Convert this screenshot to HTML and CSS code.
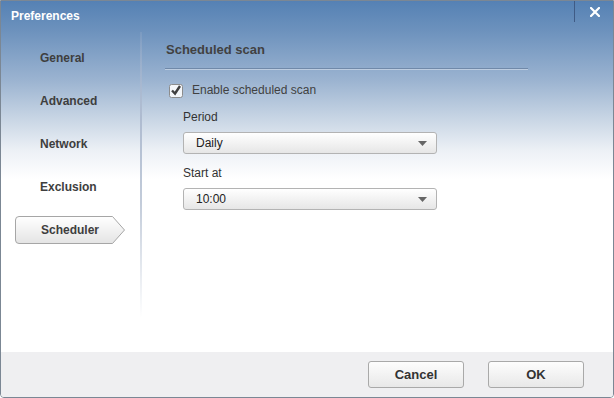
FILE: index.html
```html
<!DOCTYPE html>
<html>
<head>
    <meta charset="UTF-8">
    <title>Preferences</title>
    <link rel="stylesheet" href="styles.css">
</head>
<body>
    <div class="dialog">
        <div class="titlebar">
            <span class="title">Preferences</span>
            <div class="close">
                <svg width="10" height="10" viewBox="0 0 10 10">
                    <path d="M1 1 L9 9 M9 1 L1 9" stroke="#fff" stroke-width="2.2" stroke-linecap="square"/>
                </svg>
            </div>
        </div>

        <div class="main">
            <div class="sidebar">
                <div class="nav-item">General</div>
                <div class="nav-item">Advanced</div>
                <div class="nav-item">Network</div>
                <div class="nav-item">Exclusion</div>
                <div class="nav-item active">
                    <svg class="tab-shape" width="112" height="29" viewBox="0 0 112 29">
                        <defs>
                            <linearGradient id="tabfill" x1="0" y1="0" x2="0" y2="1">
                                <stop offset="0" stop-color="#ffffff"/>
                                <stop offset="1" stop-color="#e4e4e4"/>
                            </linearGradient>
                        </defs>
                        <path d="M4 0.5 H97.5 L109.5 14 L97.5 27.5 H4 Q0.5 27.5 0.5 24 V4 Q0.5 0.5 4 0.5 Z" fill="url(#tabfill)" stroke="#a6a6a6"/>
                    </svg>
                    <span>Scheduler</span>
                </div>
            </div>
            <div class="divider"></div>
            <div class="content">
                <div class="section-title">Scheduled scan</div>

                <div class="check-row">
                    <svg class="checkbox" width="15" height="15" viewBox="0 0 15 15">
                        <rect x="0.5" y="1.5" width="13" height="13" rx="2" fill="#f4f6f9" stroke="#8c8c8c"/>
                        <path d="M3 7.5 L6 10.5 L11 3" fill="none" stroke="#404040" stroke-width="2.4"/>
                    </svg>
                    <span>Enable scheduled scan</span>
                </div>

                <div class="field">
                    <div class="field-label">Period</div>
                    <div class="select">
                        <span>Daily</span>
                        <svg width="9" height="5" viewBox="0 0 9 5"><path d="M0 0 H9 L4.5 5 Z" fill="#666"/></svg>
                    </div>
                </div>

                <div class="field">
                    <div class="field-label">Start at</div>
                    <div class="select">
                        <span>10:00</span>
                        <svg width="9" height="5" viewBox="0 0 9 5"><path d="M0 0 H9 L4.5 5 Z" fill="#666"/></svg>
                    </div>
                </div>
            </div>
        </div>

        <div class="footer">
            <button class="btn">Cancel</button>
            <button class="btn">OK</button>
        </div>
    </div>
</body>
</html>
```

FILE: styles.css
```css
body {
    margin: 0;
    font-family: 'Liberation Sans', Arial, sans-serif;
}

.dialog {
    box-sizing: border-box;
    width: 614px;
    height: 398px;
    border: 1px solid #7b8794;
    border-radius: 0 0 4px 4px;
    overflow: hidden;
    display: flex;
    flex-direction: column;
    background: linear-gradient(to bottom, #5581b4 0px, #6d92bd 30px, #9cb4d1 80px, #c5d3e3 115px, #edf1f6 150px, #ffffff 178px);
}

.titlebar {
    height: 29px;
    display: flex;
    align-items: center;
    padding-left: 10px;
}

.title {
    color: #fff;
    font-weight: bold;
    font-size: 12px;
}

.close {
    margin-left: auto;
    align-self: flex-start;
    width: 37px;
    height: 20px;
    border-left: 1px solid #3f5b85;
    display: flex;
    align-items: center;
    justify-content: center;
    padding-left: 1px;
    padding-top: 1px;
}

.main {
    flex: 1;
    display: flex;
}

.sidebar {
    width: 125px;
    padding: 14px 0 0 14px;
}

.nav-item {
    position: relative;
    height: 27px;
    line-height: 29px;
    margin-bottom: 16px;
    padding-left: 25px;
    font-size: 12px;
    font-weight: bold;
    color: #3e3e3e;
}

.nav-item span {
    position: relative;
    padding-left: 1px;
}

.tab-shape {
    position: absolute;
    left: 0;
    top: 0;
}

.divider {
    width: 2px;
    margin: 2px 0 34px;
    background: linear-gradient(to bottom, rgba(150, 170, 200, 0.3) 0%, #aebbd0 30%, #c3ccda 60%, rgba(220, 225, 235, 0) 100%);
}

.content {
    flex: 1;
    padding-left: 23px;
}

.section-title {
    width: 362px;
    margin-top: 12px;
    padding: 0 0 10px 1px;
    line-height: 16px;
    font-size: 13px;
    font-weight: bold;
    color: #414141;
    border-bottom: 1px solid #7089a9;
    box-shadow: 0 1px 0 rgba(255, 255, 255, 0.4);
}

.check-row {
    display: flex;
    align-items: center;
    height: 16px;
    margin-top: 13px;
    padding-left: 4px;
    font-size: 12px;
    color: #414141;
}

.checkbox {
    margin-right: 8px;
}

.field {
    margin-left: 18px;
}

.field-label {
    margin-top: 12px;
    line-height: 15px;
    font-size: 12px;
    color: #333;
}

.select {
    box-sizing: border-box;
    width: 254px;
    height: 22px;
    margin-top: 7px;
    padding: 0 9px 0 12px;
    display: flex;
    align-items: center;
    justify-content: space-between;
    border: 1px solid #b3b3b3;
    border-radius: 3px;
    background: linear-gradient(to bottom, #ffffff, #e6e6e6);
    font-size: 12px;
    color: #222;
}

.footer {
    height: 45px;
    display: flex;
    align-items: center;
    justify-content: flex-end;
    gap: 24px;
    padding-right: 29px;
    background: #efeff1;
}

.btn {
    width: 96px;
    height: 27px;
    border: 1px solid #a9a9a9;
    border-radius: 3px;
    background: linear-gradient(to bottom, #fdfdfd, #e8e8e8);
    font-family: 'Liberation Sans', Arial, sans-serif;
    font-size: 13px;
    font-weight: bold;
    color: #333;
}
```
